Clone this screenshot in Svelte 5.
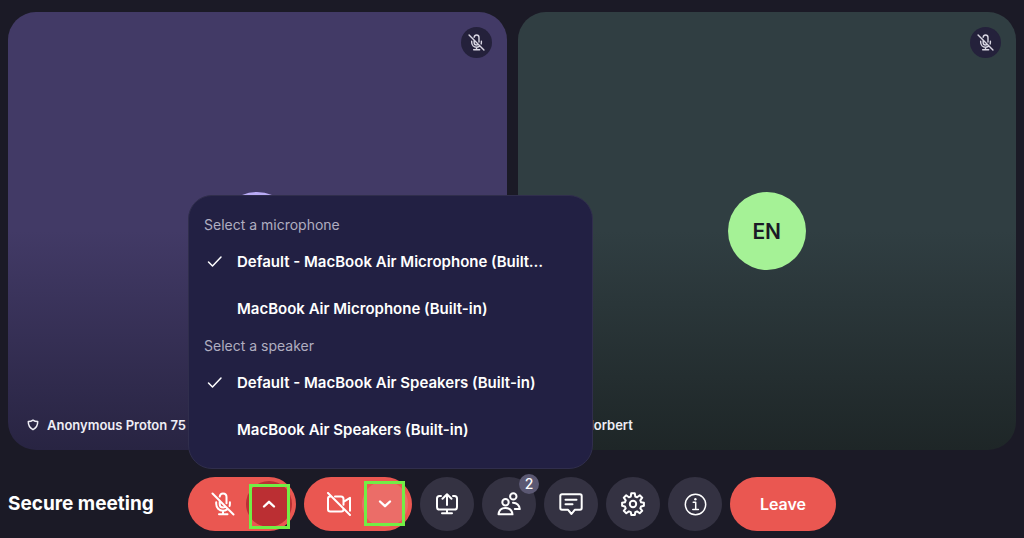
<script>
  const groups = [
    {
      label: 'Select a microphone',
      items: ['Default - MacBook Air Microphone (Built-in)', 'MacBook Air Microphone (Built-in)']
    },
    {
      label: 'Select a speaker',
      items: ['Default - MacBook Air Speakers (Built-in)', 'MacBook Air Speakers (Built-in)']
    }
  ];
  let selected = $state([0, 0]);
</script>

{#snippet micOff(size)}
  <svg width={size} height={size} viewBox="0 0 24 24" aria-hidden="true">
    <path d="M1.500 1.500l21 21M8.700 4.600C9 2.700 10.300 1.500 12 1.500c2 0 3.500 1.500 3.500 3.500v6.300M8.700 8.900v3.100c0 2 1.500 3.500 3.400 3.500.7 0 1.300-.2 1.800-.5M5.200 10.200v1.600c0 4 2.900 6.900 6.800 6.900 1.400 0 2.700-.4 3.800-1.100M18.900 10.200v1.600c0 .8-.1 1.500-.3 2.200M12 18.700v3.600M8 22.300h8.500" />
  </svg>
{/snippet}

{#snippet shield()}
  <svg width="12" height="12" viewBox="0 0 12 12" aria-hidden="true">
    <path d="M6 1.200C4.800 2.100 3.100 2.600 1.300 2.600c-.1 3.700 1.300 6.400 4.700 8.100 3.400-1.700 4.800-4.400 4.700-8.100C8.900 2.600 7.200 2.100 6 1.200z" />
  </svg>
{/snippet}

<div class="page">
  <main class="tiles">
    <section class="tile purple">
      <span class="muted">{@render micOff(17)}</span>
      <div class="avatar violet"></div>
      <div class="name">
        {@render shield()}
        <span>Anonymous Proton 75</span>
      </div>
    </section>
    <section class="tile green">
      <span class="muted">{@render micOff(17)}</span>
      <div class="avatar lime">EN</div>
      <div class="name">
        {@render shield()}
        <span>Eric Norbert</span>
      </div>
    </section>
  </main>

  <footer class="bar">
    <h1>Secure meeting</h1>
    <div class="controls">
      <div class="pill">
        <button class="main" aria-label="Unmute microphone">{@render micOff(24)}</button>
        <button class="caret open" aria-label="Audio devices" aria-expanded="true">
          <svg width="14" height="14" viewBox="0 0 14 14" aria-hidden="true"><path d="M2 9.500l5-4.700 5 4.700" /></svg>
        </button>
        <span class="mark low"></span>

        <div class="menu">
          {#each groups as group, g}
            <h2>{group.label}</h2>
            <ul>
              {#each group.items as item, i}
                <li>
                  <button class="device" aria-pressed={selected[g] === i} onclick={() => (selected[g] = i)}>
                    <span class="tick">
                      {#if selected[g] === i}
                        <svg width="16" height="16" viewBox="0 0 16 16" aria-hidden="true"><path d="M1.500 8l4 4 8.500-9" /></svg>
                      {/if}
                    </span>
                    <span class="text">{item}</span>
                  </button>
                </li>
              {/each}
            </ul>
          {/each}
        </div>
      </div>

      <div class="pill">
        <button class="main" aria-label="Turn on camera">
          <svg width="26" height="24" viewBox="0 0 26 24" aria-hidden="true">
            <path d="M2 1l22 22M9 4.500h6c1.500 0 2.500 1 2.500 2.500v2.800l6.500-4v13M5 4.500H4.200C3 4.500 2 5.500 2 6.700v10.600c0 1.200 1 2.200 2.200 2.200h11.100c1.200 0 2.200-1 2.200-2.200v-.8M17.500 9.800v3" />
          </svg>
        </button>
        <button class="caret" aria-label="Camera devices">
          <svg width="14" height="14" viewBox="0 0 14 14" aria-hidden="true"><path d="M2 4.500l5 4.700 5-4.700" /></svg>
        </button>
        <span class="mark high"></span>
      </div>

      <button class="round" aria-label="Share screen">
        <svg width="24" height="24" viewBox="0 0 24 24" aria-hidden="true">
          <path d="M6 4H4.500A2.500 2.500 0 0 0 2 6.500v8.600a2.500 2.500 0 0 0 2.500 2.500h15a2.500 2.500 0 0 0 2.500-2.500V6.500A2.500 2.500 0 0 0 19.500 4H18M12 13V2.500M7.500 6.800L12 2.300l4.500 4.500M12 17.600v3.600M7 21.300h10" />
        </svg>
      </button>
      <button class="round" aria-label="Participants">
        <svg width="24" height="24" viewBox="0 0 24 24" aria-hidden="true">
          <circle cx="8.500" cy="10.200" r="3.200" />
          <circle cx="16.300" cy="4.400" r="3.200" />
          <path d="M1.500 22.300c.5-4 3.200-6.300 7-6.300s6.500 2.300 7 6.300zM16 10.700c3.800.1 6.300 2.500 6.800 6.400h-5" />
        </svg>
        <span class="count">2</span>
      </button>
      <button class="round" aria-label="Chat">
        <svg width="24" height="24" viewBox="0 0 24 24" aria-hidden="true">
          <path d="M3 2.200h18a1.700 1.700 0 0 1 1.700 1.700v12.200a1.700 1.700 0 0 1-1.700 1.700h-5.300L12.500 22l-3.400-4.200H3a1.700 1.700 0 0 1-1.700-1.700V3.900A1.700 1.700 0 0 1 3 2.200zM6.500 7.800h11M6.500 12.300h7" />
        </svg>
      </button>
      <button class="round" aria-label="Settings">
        <svg width="24" height="24" viewBox="0 0 24 24" aria-hidden="true">
          <circle cx="12" cy="12" r="3.200" />
          <path d="M10.200 1.300h3.600l.5 3.200 1.800.8 2.700-2 2.400 2.400-1.900 2.700.8 1.900 2.800.5v3l-2.800.6-.8 1.900 1.900 2.600-2.500 2.400-2.600-1.900-1.800.8-.5 2.800h-3.500l-.5-2.800-1.900-.8-2.600 1.900-2.500-2.400 1.900-2.600-.8-1.900-2.800-.6v-3l2.800-.5.8-1.900-1.900-2.700 2.400-2.400 2.700 2 1.900-.8z" />
        </svg>
      </button>
      <button class="round" aria-label="Meeting details">
        <svg class="thin" width="24" height="24" viewBox="0 0 24 24" aria-hidden="true">
          <circle cx="12.500" cy="12.500" r="10.200" />
          <path d="M10.200 10.300h2.500v7M9.800 17.400h5.600" />
          <circle class="dot" cx="12.400" cy="7.300" r="1.200" />
        </svg>
      </button>
      <button class="leave">Leave</button>
    </div>
  </footer>
</div>

<style>
  :global(body) {
    margin: 0;
    background: #1b1a26;
  }
  .page {
    box-sizing: border-box;
    min-height: 100vh;
    display: flex;
    flex-direction: column;
    padding: 12px 8px 7px;
    font-family: Inter, sans-serif;
    color: #fff;
  }
  .tiles {
    flex: 1;
    display: grid;
    grid-template-columns: 1fr 1fr;
    gap: 11px;
  }
  .tile {
    position: relative;
    display: grid;
    place-items: center;
    border-radius: 28px;
  }
  .purple {
    background: linear-gradient(#423a66 50%, #282442);
  }
  .green {
    background: linear-gradient(#303e42 50%, #1e2627);
  }
  .avatar {
    width: 78px;
    height: 78px;
    border-radius: 50%;
    display: grid;
    place-items: center;
    color: #1b1a26;
    font-size: 21px;
    font-weight: 600;
  }
  .violet {
    background: #b9abf5;
  }
  .lime {
    background: #a5f296;
  }
  .muted {
    position: absolute;
    top: 15px;
    right: 15px;
    width: 31px;
    height: 31px;
    border-radius: 50%;
    display: grid;
    place-items: center;
    background: #24213b;
    color: #d9d7e3;
  }
  .name {
    position: absolute;
    left: 19px;
    bottom: 15px;
    display: flex;
    align-items: center;
    gap: 8px;
    font-size: 13px;
    font-weight: 600;
    line-height: 20px;
    color: #efeef5;
  }
  svg {
    display: block;
    fill: none;
    stroke: currentColor;
    stroke-width: 2;
    stroke-linecap: round;
    stroke-linejoin: round;
  }
  .name svg,
  .thin,
  .tick svg {
    stroke-width: 1.5;
  }
  .dot {
    fill: currentColor;
    stroke: none;
  }
  .bar {
    display: grid;
    grid-template-columns: 1fr auto 1fr;
    align-items: center;
    margin-top: 27px;
  }
  h1 {
    margin: 0;
    font-size: 19px;
    font-weight: 700;
    line-height: 28px;
    white-space: nowrap;
  }
  .controls {
    display: flex;
    gap: 8px;
  }
  button {
    border: 0;
    padding: 0;
    background: none;
    color: inherit;
    font: inherit;
    cursor: pointer;
  }
  .pill {
    position: relative;
    display: flex;
    align-items: center;
    width: 108px;
    height: 54px;
    border-radius: 27px;
    background: #ea5751;
  }
  .main {
    flex: 1;
    height: 100%;
    display: grid;
    place-items: center;
    padding-left: 12px;
  }
  .caret {
    width: 46px;
    height: 46px;
    margin-right: 4px;
    border-radius: 50%;
    display: grid;
    place-items: center;
    background: #eb6d68;
  }
  .caret svg {
    stroke-width: 2.4;
  }
  .caret.open {
    background: #bb2f33;
  }
  .mark {
    position: absolute;
    box-sizing: border-box;
    width: 41px;
    height: 45px;
    border: 3px solid #72ee45;
    pointer-events: none;
  }
  .low {
    right: 6px;
    top: 7px;
  }
  .high {
    right: 7px;
    top: 4px;
  }
  .round {
    position: relative;
    width: 54px;
    height: 54px;
    border-radius: 50%;
    display: grid;
    place-items: center;
    background: #343242;
  }
  .count {
    position: absolute;
    top: -3px;
    right: -3px;
    width: 20px;
    height: 20px;
    border-radius: 50%;
    background: #5b5873;
    font-size: 14px;
    font-weight: 500;
    line-height: 20px;
    text-align: center;
  }
  .leave {
    width: 106px;
    height: 54px;
    border-radius: 27px;
    background: #ea5751;
    font-size: 16px;
    font-weight: 600;
  }
  .menu {
    position: absolute;
    left: 0;
    bottom: calc(100% + 8px);
    box-sizing: border-box;
    width: 405px;
    padding: 15px;
    border: 1px solid #302e4c;
    border-radius: 24px;
    background: #222043;
  }
  h2 {
    margin: 0;
    font-size: 14px;
    font-weight: 400;
    line-height: 27px;
    color: #b0aec0;
  }
  ul {
    margin: 0;
    padding: 0;
    list-style: none;
  }
  .device {
    display: flex;
    align-items: center;
    gap: 14px;
    width: 100%;
    height: 47px;
    padding: 0 28px 0 3px;
    font-size: 15px;
    font-weight: 600;
    text-align: left;
  }
  .tick {
    flex: none;
    width: 16px;
  }
  .text {
    overflow: hidden;
    text-overflow: ellipsis;
    white-space: nowrap;
    line-height: 24px;
  }
</style>
